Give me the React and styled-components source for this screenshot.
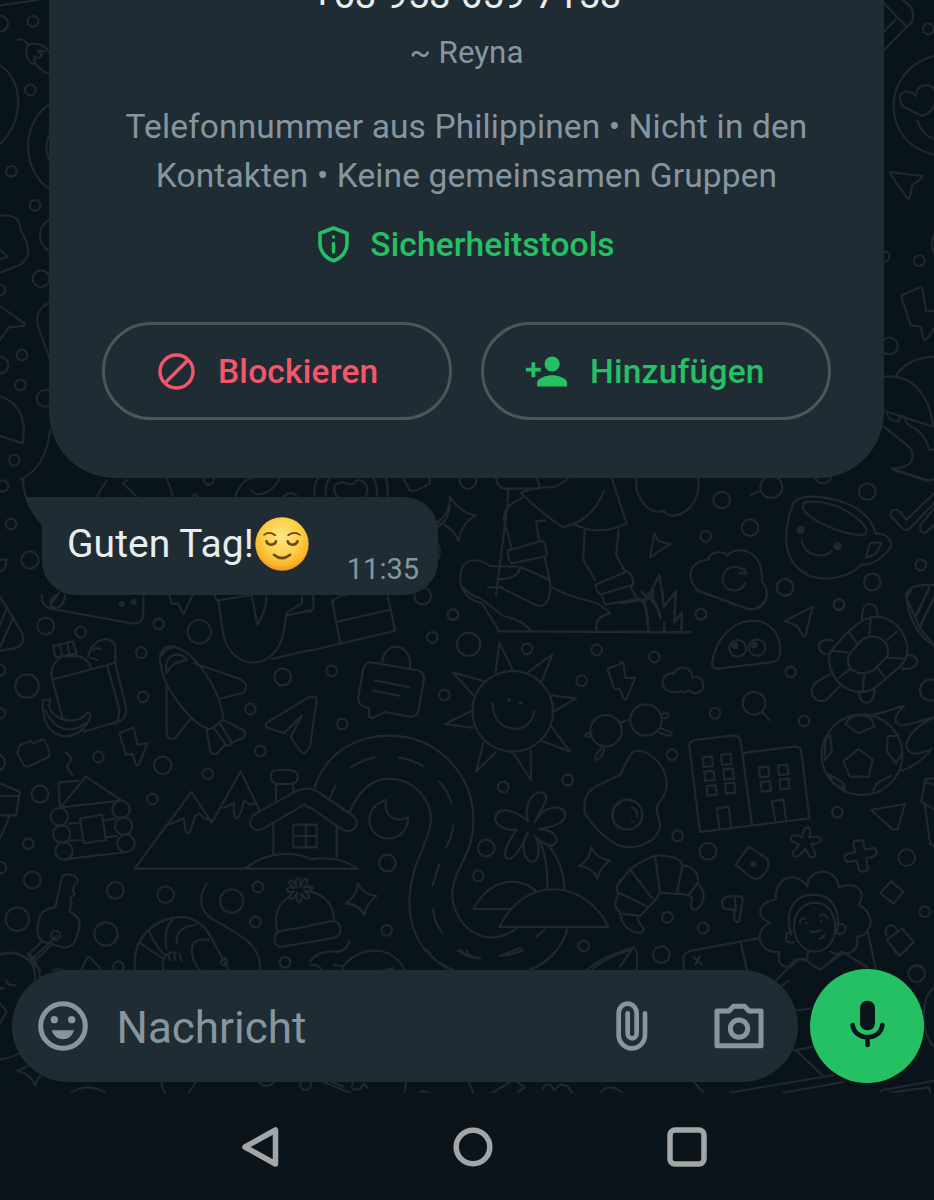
import styled, { createGlobalStyle } from 'styled-components';
import { MdPersonAdd } from 'react-icons/md';

const colors = {
  wallpaper: '#09141a',
  doodle: '#1f282f',
  surface: '#202c33',
  navigation: '#0b141a',
  outline: '#4b565d',
  text: '#e9edef',
  muted: '#8696a0',
  green: '#25c063',
  red: '#f4566a',
};

const GlobalStyle = createGlobalStyle`
  body {
    margin: 0;
    background: ${colors.navigation};
    font-family: Roboto, 'Liberation Sans', sans-serif;
  }
`;

const Screen = styled.div`
  display: flex;
  flex-direction: column;
  width: 934px;
  height: 1200px;
  overflow: hidden;
`;

const Chat = styled.main`
  position: relative;
  display: flex;
  flex-direction: column;
  height: 1093px;
  overflow: hidden;
  background: ${colors.wallpaper};
`;

const WallpaperSvg = styled.svg`
  position: absolute;
  top: 0;
  left: 0;
  fill: none;
  stroke: ${colors.doodle};
  stroke-width: 6.4px;
  stroke-linecap: round;
  stroke-linejoin: round;
`;

const ContactCard = styled.section`
  position: relative;
  display: flex;
  flex-direction: column;
  align-items: center;
  box-sizing: border-box;
  height: 478px;
  margin: 0 50px 0 49px;
  border-radius: 0 0 66px 66px;
  background: ${colors.surface};
  text-align: center;
`;

const PhoneNumber = styled.h1`
  height: 32px;
  margin: -21px 0 0;
  color: ${colors.text};
  font-size: 38.5px;
  font-weight: 400;
  line-height: 32px;
  white-space: nowrap;
`;

const Nickname = styled.p`
  margin: 22px 0 0;
  color: ${colors.muted};
  font-size: 31.3px;
  line-height: 40px;
`;

const Details = styled.p`
  margin: 30px 0 0;
  color: ${colors.muted};
  font-size: 33.5px;
  line-height: 48.5px;
  letter-spacing: 0.12px;
`;

const SafetyLink = styled.a`
  display: flex;
  align-items: center;
  gap: 21px;
  height: 40px;
  margin-top: 24px;
  color: ${colors.green};
  font-size: 33.5px;
  font-weight: 500;
  letter-spacing: 0.1px;
`;

const Actions = styled.div`
  display: flex;
  gap: 29px;
  margin-top: 58px;
`;

const ActionButton = styled.button`
  display: flex;
  align-items: center;
  box-sizing: border-box;
  width: 350px;
  height: 98px;
  padding: 0 0 0 ${props => props.$inset}px;
  gap: ${props => props.$gap}px;
  border: 3px solid ${colors.outline};
  border-radius: 49px;
  background: none;
  color: ${props => props.$color};
  font-family: inherit;
  font-size: 33.5px;
  font-weight: 500;
  letter-spacing: 0.22px;
`;

const Bubble = styled.article`
  position: relative;
  display: flex;
  justify-content: space-between;
  box-sizing: border-box;
  width: 396px;
  height: 98px;
  margin: 19px 0 0 42px;
  padding: 0 19px 0 25px;
  border-radius: 0 34px 34px 34px;
  background: ${colors.surface};
`;

const BubbleTail = styled.svg`
  position: absolute;
  top: 0;
  left: -18px;
  fill: ${colors.surface};
`;

const Message = styled.p`
  display: flex;
  align-items: center;
  gap: 1px;
  height: 94px;
  margin: 0;
  color: ${colors.text};
  font-size: 39px;
  letter-spacing: 0.05px;
`;

const Time = styled.time`
  align-self: flex-end;
  margin-bottom: 9px;
  color: ${colors.muted};
  font-size: 29px;
  line-height: 34px;
`;

const Footer = styled.footer`
  position: relative;
  display: flex;
  align-items: center;
  gap: 12px;
  margin: auto 10px 10.5px 12px;
`;

const Composer = styled.div`
  display: flex;
  align-items: center;
  box-sizing: border-box;
  width: 786px;
  height: 112px;
  padding: 0 34px 0 26px;
  border-radius: 56px;
  background: ${colors.surface};
  color: ${colors.muted};
`;

const Placeholder = styled.span`
  flex: 1;
  margin-left: 28.5px;
  padding-top: 4px;
  font-size: 44px;
`;

const ComposerTools = styled.div`
  display: flex;
  align-items: center;
  gap: 66px;
`;

const MicButton = styled.button`
  display: flex;
  align-items: center;
  justify-content: center;
  width: 114px;
  height: 114px;
  padding: 0 0 3px;
  box-sizing: border-box;
  border: 0;
  border-radius: 50%;
  background: ${colors.green};
  color: ${colors.navigation};
`;

const Navigation = styled.nav`
  display: flex;
  align-items: center;
  justify-content: center;
  gap: 174px;
  flex: 1;
  padding-left: 14px;
  background: ${colors.navigation};
`;

const NavIcon = styled.svg`
  fill: none;
  stroke: #a3a5a7;
  stroke-width: 5.5px;
  stroke-linejoin: round;
`;

// Each tile is drawn at three units per pixel, with its corner at x, y
const tiles = [
  {
    x: 0,
    y: 590,
    circles: [
      [137, 108, 25], [242, 126, 16], [476, 102, 16], [598, 125, 35],
      [424, 188, 16], [81, 288, 35], [429, 321, 16], [848, 261, 25],
      [751, 357, 16], [781, 483, 16], [295, 501, 16], [488, 526, 26],
      [623, 551, 16], [120, 612, 25], [457, 627, 16], [85, 761, 16],
      [0, 241, 16], [0, 370, 16], [-10, 518, 25], [2, 833, 17],
      [97, 870, 25], [346, 901, 25], [497, 914, 25], [695, 933, 35],
      [774, 891, 16], [766, 996, 16], [52, 988, 35], [318, 1032, 35],
      [355, 1130, 16], [855, 1117, 16], [366, 42, 6], [401, 36, 6],
      [178, 680, 26], [185, 732, 26], [192, 783, 26], [363, 658, 26],
      [371, 708, 26], [378, 760, 26], [167, 1036, 13],
    ],
    paths: [
      // road cone
      'M0 20L66 128Q78 165 45 175L0 182M22 50L0 105M40 82L0 172',
      // cheese
      'M126 15Q122 50 158 57L395 100Q428 104 430 70V15M195 15Q190 60 158 52Q140 30 170 15M150 45L178 8',
      'M508 15L516 42L535 40L550 73L578 15',
      // shovel
      'M645 15L650 32L755 15L772 105Q800 60 800 15M655 30L668 120C680 240 830 260 852 120L860 68L906 40V15M860 76L930 62M815 207L930 180',
      // picnic bag
      'M160 168L218 154Q226 175 230 190L170 202Q160 190 160 168M180 165L186 198M202 160L208 194M180 204Q150 225 155 260L188 387M200 200Q262 190 273 235M160 268L342 220M264 200C275 145 335 130 346 170V220L378 350Q382 380 362 392L250 425M322 228L356 350Q362 380 345 402M330 222L342 220M280 180Q290 170 304 178M272 204L294 210',
      'M128 330L150 328L148 350C155 390 230 410 262 368Q275 368 270 385C250 430 205 450 170 432Q125 410 128 330M136 362Q180 450 258 400',
      // rocket
      'M484 230C470 190 490 165 525 170C590 190 660 300 670 385Q650 410 628 418C570 400 490 290 484 230M500 250Q490 200 530 193Q550 195 562 210Q515 215 500 250M582 220L722 268Q750 285 730 308L660 326M500 290V435Q508 455 526 444L570 388M620 420L630 482Q638 498 652 490L676 463M668 388L732 422Q742 438 724 446L694 458M640 412L676 462Q690 476 694 456L662 404M484 196Q500 170 530 172',
      'M930 320L800 398Q792 410 806 414L852 430L906 376L872 442L900 482Q914 500 922 480L930 470',
      // brick and lightning
      'M60 465L92 452L98 460L128 447Q136 448 150 492Q148 500 140 504L84 530Q74 532 68 520L52 490Q54 478 60 465',
      'M358 430L402 412L412 464L442 460L418 522Q410 530 406 520L398 492L378 494L358 430',
      // log house
      'M197 487Q216 500 212 515Q196 525 206 540L219 557M180 650L175 578L236 572M182 652L258 560L362 630M182 652L362 632M204 702L242 698M316 690L344 686M210 752L250 750M318 742L350 738M192 808L380 786M240 686L306 674L318 750L252 760Z',
      // pot
      'M0 580L60 605L48 676H0M0 618H56M28 680L0 745',
      // mountains and cottage
      'M404 836L574 606L635 698L722 544L778 660M404 836H930M506 704L552 684C555 750 570 740 584 680L598 670L612 684L632 690M668 654L702 640C698 705 718 700 732 630L750 644L770 640M830 582H880V608M828 632V582Q810 575 813 556Q816 540 836 540H872Q894 545 894 562Q892 582 870 582M930 596Q900 596 880 608L762 674C735 700 758 730 790 716L912 644L930 654M820 704V792M735 836C800 784 880 784 930 806M930 704H880V772H930M918 704V772M880 738H930',
      // keys
      'M166 952L186 862Q194 852 204 852L224 858Q234 865 232 876L222 885V892L218 900L224 912L210 925L214 940L208 965C225 972 244 985 238 1015L225 1055Q210 1075 188 1072L145 1060Q112 1055 112 1020C115 980 122 955 166 952M170 1038L98 1105M126 1054L84 1095M158 1060L110 1108M84 1090L110 1108M0 1094Q60 1072 105 1130M88 1100L120 1140',
      // shrimp
      'M405 1140C395 1030 480 975 560 982Q610 995 632 1040L686 1140M422 1060L488 1105M446 1020Q460 1060 494 1094M500 1078Q490 1010 518 990M530 1060Q525 1010 590 1004M576 1090Q570 1040 626 1050M490 1140C480 1100 510 1080 528 1090M510 1112L506 1098M524 1110V1094M544 1112L540 1092M576 1090Q580 1120 600 1140',
      'M620 880C590 930 600 975 660 1000C730 1040 785 1070 780 1140M244 1140L262 1102Q270 1100 276 1108L304 1140',
      // wool hat
      'M838 1024Q822 1030 824 1052Q828 1072 846 1070L930 1056M835 1024L930 1008M830 1020Q820 950 865 922M890 892Q882 866 894 864Q904 866 900 890Q910 864 920 868Q928 876 910 894Q934 884 938 894Q936 906 912 904Q934 914 926 924Q916 930 904 910Q908 936 896 936Q886 932 892 908Q880 930 870 926Q864 916 882 904Q860 910 860 898Q862 890 882 894Q862 880 870 872Q880 868 890 892',
    ],
  },
  {
    x: 310,
    y: 590,
    circles: [
      [338, 18, 25], [429, 74, 16], [367, 142, 16], [476, 163, 35],
      [651, 177, 16], [860, 180, 16], [65, 242, 16], [403, 315, 16],
      [815, 272, 16], [97, 402, 16], [580, 591, 16], [773, 570, 16],
      [232, 819, 25], [529, 774, 25], [505, 857, 16], [230, 1021, 16],
      [821, 1068, 16], [608, 364, 121], [597, 331, 3], [631, 339, 3],
      [888, 422, 47],
    ],
    paths: [
      'M0 182L256 122L232 15M66 30L90 155M78 96L238 60M10 15V55Q5 65 0 65M66 40Q80 15 110 15',
      // chat note
      'M218 215C220 150 310 155 300 235M184 217L320 240Q344 246 342 268L326 360Q320 382 300 380L224 366L188 384Q174 384 176 370L178 355Q145 350 144 325L160 235Q168 215 184 217M194 271L300 292M188 301L267 317',
      // sun
      'M557 248L568 158L608 240M654 247L728 192L695 274M724 316L798 325L731 364M724 410L780 485L694 452M662 482L663 570L610 490M558 486L498 544L521 456M490 414L405 402L486 362M490 316L428 247L522 274M548 339C546 435 664 440 673 363',
      // road
      'M14 592C50 480 150 436 240 437C380 438 490 550 490 690C490 745 478 775 456 820C420 890 420 925 440 970C480 1050 560 1060 618 1016M120 664C150 595 190 565 240 566C310 568 363 625 363 690C360 745 320 800 308 860C275 1000 330 1100 430 1140M772 1018Q755 1090 664 1140M60 625L76 587M122 533Q155 510 194 502M266 502Q310 510 338 528M387 573Q415 605 425 640M430 707Q425 745 408 772M388 822L368 887M368 958Q375 1000 396 1029M443 1081Q475 1105 510 1105M570 1098L632 1074M680 1040L706 1018',
      // moon
      'M228 630C205 638 178 655 178 690C180 765 295 765 294 682C255 700 220 680 228 630',
      // cottage roof
      'M0 597Q15 598 25 606L130 678C158 705 125 735 96 718L0 652M80 708V806M0 704H20V772H0M0 738H20M0 808Q85 795 144 836H0',
      // palm and islands
      'M654 694C640 650 665 605 695 607C730 620 685 670 674 696C700 645 760 640 766 675C765 705 710 712 688 718C740 720 750 750 730 765C710 775 680 740 674 738C690 760 690 810 670 816C640 815 630 760 654 728C640 760 610 815 592 806C570 790 605 740 620 718C590 725 550 705 556 680C570 640 625 670 650 690M690 756Q715 810 712 896M716 768Q760 820 764 900M490 957H605M490 957C550 850 640 865 680 906M568 1011H896C820 860 640 860 568 1011',
      'M144 880Q160 915 200 918Q170 940 162 976Q148 942 106 940Q140 920 144 880M844 772Q860 808 900 811Q870 832 862 866Q850 832 806 828Q838 812 844 772',
      'M0 905Q70 920 72 992L0 1006M72 992Q95 1000 90 1030Q85 1040 70 1044L0 1056M0 890V905M118 1052Q110 1085 80 1085Q20 1080 0 1115M0 1126Q20 1120 36 1140M72 1126L100 1128L98 1140M100 1128C160 1060 250 1070 284 1140M222 1140L250 1136M830 1140Q880 1100 930 1086',
      'M846 428Q820 432 826 438Q836 442 846 438M876 472Q850 500 858 510Q875 508 884 474M930 222L892 236L912 294Q916 302 930 296M930 556C850 590 815 600 824 670C850 710 890 750 930 768M930 640C900 650 900 700 930 714M930 870Q915 890 925 915Q905 950 930 966',
      'M0 470L20 330Q22 318 0 322',
    ],
  },
  {
    x: 620,
    y: 590,
    circles: [
      [243, 73, 16], [657, 43, 16], [103, 201, 16], [512, 246, 16],
      [285, 370, 16], [552, 393, 16], [156, 494, 16], [652, 667, 16],
      [173, 737, 16], [264, 784, 25], [860, 803, 25], [914, 965, 16],
      [142, 982, 16], [249, 1014, 16], [124, 1094, 25], [353, 175, 25],
      [411, 173, 25], [345, 167, 7], [403, 165, 7], [402, 340, 34],
      [78, 390, 47], [22, 674, 45], [726, 494, 121], [400, 823, 6],
      [495, -8, 25], [932, 300, 32],
    ],
    paths: [
      'M0 40L74 28L85 122M0 125L211 127M66 5Q80 20 82 30M85 8Q115 40 120 84M100 0L98 30M128 0L131 50L168 6L162 98L186 68L184 122M132 100V122M228 0L375 54C420 70 450 30 438 0',
      // blob with eyes
      'M276 220C300 60 480 55 480 180V192Q478 210 460 216L294 236Q275 236 276 220M495 93L578 50L556 138Q550 144 545 130L532 108Z',
      'M0 216L10 218L16 264L46 263L18 328Q12 335 0 296',
      'M138 300C115 275 135 245 160 252C170 225 215 225 217 262C250 250 262 300 235 307C225 312 212 308 205 300Q195 312 184 302Q165 312 138 300M427 365L449 390M0 398L30 388M0 396Q12 425 0 445M124 378Q128 365 142 370Q150 378 138 384L125 386M122 414L152 427Q160 435 148 438L118 428',
      // turtle
      'M646 168C720 80 770 55 830 105C870 150 870 195 845 225L770 290C720 325 650 300 630 230Q620 190 646 168M690 190L725 150C770 120 820 160 800 200L764 238C715 270 665 230 690 190M726 92Q725 40 750 42Q776 45 772 84M640 152C580 135 590 200 628 192M634 250L592 275C555 300 585 345 618 330L658 290M718 304C715 350 765 350 764 298M858 195C905 190 905 245 845 236M630 182L682 187M688 126L710 160M752 84L748 136M830 126L800 150M802 203L858 206M770 230L794 262M733 254L728 304M688 238L656 264',
      'M864 0C850 60 895 145 942 164M875 0L860 20M926 0L884 80M942 22L898 112',
      // apartment blocks
      'M240 726L208 470Q206 454 224 450L342 436Q358 436 362 454L396 704M240 726L568 685L544 486Q540 468 524 470L376 488Q370 490 370 500M298 715L290 656L326 650L334 712M466 692L456 634L490 629L498 688M248 502L276 499L278 528L251 531ZM303 494L332 491L335 522L306 525ZM252 545L280 542L284 570L256 573ZM310 538L338 535L342 566L313 569ZM260 588L287 586L290 614L262 617ZM315 581L343 578L346 607L318 610ZM417 533L445 530L448 559L420 562ZM474 526L502 524L505 552L477 555ZM422 576L450 573L453 602L425 605ZM479 569L506 566L509 595L481 598Z',
      // football on fire
      'M715 477L758 508L746 560H690L670 514ZM676 402L715 430L764 410L752 384Q720 368 690 384ZM836 438H804L800 484L828 520L846 490M630 434L616 452L614 512L636 484ZM626 552L640 580L676 598L668 578ZM760 602L770 580L814 556M760 373C800 368 820 355 852 348C800 400 840 410 860 404L942 382C840 430 840 500 900 490L934 478Q890 530 844 542',
      // fried egg
      'M0 556C30 500 30 460 90 495C140 530 160 590 115 640C95 680 150 700 95 750Q55 780 0 768M36 652Q54 660 50 680M35 694L37 695',
      'M753 660L855 642L832 720L818 718ZM942 565L916 567L904 636L942 658M914 640L930 760L942 770M916 575L942 585',
      'M386 770L442 806Q454 840 416 866Q400 870 380 852L347 824ZM547 742L550 724C555 708 570 710 571 724L568 742Q605 735 602 752Q598 762 574 762L586 790Q588 808 570 800L556 776L538 796Q518 806 518 788L538 764L516 754C505 735 525 730 547 742M700 762L702 754L728 750L734 778L764 774Q776 790 762 800L738 804L744 835Q735 850 718 842L710 812L680 816Q668 802 680 792L706 786ZM813 874L850 905L821 941L781 910Z',
      // croissant
      'M0 880C25 830 70 810 105 797C150 795 180 805 188 826C225 830 240 860 232 880C265 910 250 950 225 960Q208 960 216 922Q200 910 170 912L120 908L104 932L62 976Q40 980 70 1014Q75 1030 50 1028C20 1020 5 1000 0 970M28 835L96 925M105 797L120 908M188 826L170 912M232 880L208 912M0 910L86 952M0 970L62 978',
      'M344 958H322Q304 955 306 936Q310 918 330 919H364Q370 922 368 930L358 992Q350 1002 342 990ZM344 924L348 958',
      // curly hair portrait
      'M468 930C460 860 530 840 562 890C560 835 650 825 656 892C715 870 740 910 716 945C760 965 755 1010 742 1020L768 1140M468 930C420 930 400 980 450 998C400 1020 410 1090 478 1086C465 1140 520 1140 530 1112M742 1020Q735 1040 710 1040C720 1080 690 1095 670 1088M514 1034C490 960 525 914 580 914C640 915 665 965 650 1030M584 938C545 940 522 970 522 1012C525 1055 552 1085 584 1085C618 1085 646 1055 646 1012C646 970 622 938 584 938M500 1034Q495 1030 516 1026M500 1034Q492 1064 524 1056M652 1002Q680 1000 676 1020Q665 1038 646 1028M540 998Q542 982 556 986M600 978Q612 966 622 984M558 1000H561M602 993H605M572 1024Q585 1030 602 1020M598 1046Q612 1044 614 1032M564 1088L560 1110Q530 1095 500 1140M600 1140L664 1085L740 1130M630 1085L650 1092',
      'M192 1140L190 1105Q195 1085 215 1082L420 1044M362 1056L380 1140M220 1100L246 1124M240 1098L226 1124M0 1085L40 1072Q56 1075 50 1140M40 1072L0 1130',
      'M800 1050L846 1016L882 1056L838 1096ZM800 1036C785 1000 830 995 832 1028M870 1140Q890 1115 912 1140',
    ],
  },
  {
    x: 420,
    y: 470,
    circles: [
      [144, 32, 25], [905, 90, 25], [990, 173, 25], [857, 199, 16],
      [1054, 51, 33], [1342, 65, 25], [1502, 285, 16], [1357, 336, 25],
      [1095, 352, 25], [1257, 404, 16], [843, 433, 16], [99, 433, 16],
      [1209, 15, 25], [1142, 180, 9], [1253, 229, 9],
    ],
    paths: [
      'M90 80Q120 130 168 136Q122 160 116 214Q98 168 50 156Q90 135 90 80M990 74L1022 62',
      // hiker
      'M228 24Q232 55 256 56H340Q362 62 356 40L350 24M256 56L264 60L262 106M302 68Q370 135 430 172Q520 150 552 62M302 68Q350 50 400 52Q430 40 444 24M575 24L620 160Q540 200 466 164M308 84Q250 105 252 150L276 238M262 106L228 376M376 152L348 154L358 214M264 242L366 212Q380 220 380 258L276 280Q262 270 264 242M374 262L390 335C395 400 370 415 345 404L240 352M204 352H248M300 290L390 330M300 290Q300 325 236 328M290 290L210 288C150 250 110 280 124 348C140 390 170 395 186 400L238 484L812 487M124 348Q155 380 180 384L250 438Q310 450 332 482M398 352C470 400 520 375 570 430Q520 440 530 482M494 180L490 270L526 330M596 180L588 256L614 302M526 344L622 304Q640 315 640 344L546 372Q530 375 526 344M545 374L556 404L660 386M632 350L650 384M650 386Q685 385 685 482',
      'M664 366Q715 400 722 444M690 370L718 314L732 410L768 362L762 454L786 430L784 482M733 460V482',
      // apple and cloud
      'M650 24C640 80 690 140 730 122C760 165 850 110 834 24M703 190L714 212L750 222L690 262ZM864 270C870 245 905 240 922 256C950 225 1030 235 1026 335C1060 370 1030 430 975 415L836 362C790 320 815 270 864 270M974 302C940 275 905 300 908 332C915 370 965 370 976 338M974 296L978 312L958 308',
      // cup
      'M1120 100C1140 65 1250 80 1310 115Q1360 150 1366 190M1120 100C1100 150 1080 240 1130 290C1180 345 1280 330 1324 284M1366 190C1400 190 1420 210 1410 235Q1370 285 1324 284M1350 220Q1370 215 1384 220Q1370 260 1338 262ZM1148 112C1140 80 1240 95 1290 130C1340 160 1350 190 1330 194C1280 200 1160 150 1148 112M1145 212C1155 260 1210 265 1234 244',
      'M1542 70L1460 150L1434 120Q1410 115 1412 138L1450 178Q1465 184 1475 170L1542 100M1542 115L1502 165Q1496 185 1515 190L1542 165M1420 0L1520 32L1542 28M1542 345Q1460 340 1458 380L1500 475L1542 525M1530 345L1490 440M1542 385L1500 470',
    ],
  },
  {
    x: 0,
    y: 480,
    circles: [
      [33, 132, 16], [90, 240, 26], [626, -2, 16], [8, 18, 17],
    ],
    paths: [
      'M70 -6Q68 30 82 60M0 240L20 238Q18 270 0 275M320 0L290 50M382 0L368 10L410 50M500 -6L520 50M576 48L586 42L594 50M706 50Q720 0 760 -6M752 30C770 60 830 30 838 -6M850 50Q870 30 890 48M944 50Q940 10 955 -6M976 50Q976 10 990 -6M1012 50C990 20 1010 0 1040 10Q1060 20 1070 0C1100 0 1110 30 1096 50M1130 50Q1134 20 1120 -6M1162 50Q1166 20 1158 -6M1210 -6L1228 30Q1240 40 1290 10L1288 -6',
      'M1314 140Q1340 130 1350 80M1314 190Q1326 220 1312 240',
    ],
  },
  {
    x: 0,
    y: 0,
    circles: [
      [0, 71, 24], [99, 64, 16], [91, 270, 16], [34, 514, 16],
      [105, 616, 16], [123, 836, 25], [0, 870, 16], [66, 1065, 16],
      [0, 1095, 25], [61, 1155, 16], [135, 1195, 25], [43, 1381, 16],
    ],
    paths: [
      'M0 16L115 0M54 120Q70 114 85 134C110 125 140 140 146 155M85 134C70 160 85 195 105 190Q125 215 148 222M106 190L102 170L118 174L126 166L112 152L134 154M0 196C70 240 75 360 0 432M150 312C70 360 55 500 150 570M148 405Q130 440 148 480M0 648C50 640 60 665 62 690C95 750 90 770 60 795L0 818M0 748L22 770L0 778M150 658C110 680 110 730 150 756M150 908C110 920 105 960 118 990L150 1080M0 918L76 972Q74 980 64 978L26 982L0 1020M0 1188C60 1210 80 1260 68 1330L0 1308M150 1290Q140 1400 60 1440',
    ],
  },
  {
    x: 870,
    y: 0,
    circles: [[175, 87, 16], [148, 782, 16], [42, 770, 16], [58, 1038, 25]],
    paths: [
      'M98 0Q140 25 126 65L42 150M42 10L108 78M42 95L78 58M192 168C30 210 30 430 192 464M156 348L100 320C70 280 110 260 138 288C140 245 190 250 192 270M192 320Q180 340 156 348M142 362Q155 405 192 418M60 520Q62 514 72 518L156 528Q160 534 126 556L120 590Q116 602 108 590ZM192 705Q180 730 192 760M192 932L168 934L158 870Q156 860 146 864L98 884Q92 888 96 896L122 976L152 980L162 1020Q168 1028 192 985M80 1125Q110 1075 192 1070M42 1130C130 1120 180 1190 190 1280L42 1232M50 1240Q60 1265 86 1266L90 1250L102 1248Q110 1278 132 1284Q165 1300 178 1350L192 1348M42 1280C110 1340 140 1340 124 1385Q110 1405 66 1406L172 1440',
    ],
  },
  {
    x: 0,
    y: 950,
    circles: [[355, 50, 16], [672, 36, 10], [855, 37, 16], [917, 404, 16]],
    paths: [
      'M0 12C60 0 110 30 105 90M95 20Q125 60 118 90M18 90Q22 108 45 106M0 115H10M0 160L20 185L0 220M0 328Q40 325 70 300M52 362Q90 350 100 330M52 362Q95 372 106 408Q110 385 125 375M215 428Q260 396 316 428M486 396Q484 415 496 428M588 396L566 428M776 396Q800 420 824 396M970 396L1050 428M996 396L1030 410M1060 396Q1050 415 1062 418H1080L1092 400L1104 415M1218 396L1214 428M1260 428Q1270 418 1284 428M1280 0Q1310 40 1350 58M1380 0L1400 15M160 60Q180 55 190 62',
    ],
  },
  {
    x: 467,
    y: 950,
    circles: [[1349, 71, 25]],
    paths: [
      'M0 0Q0 20 40 24M98 18Q140 14 168 0M190 58Q240 40 270 0M376 58Q420 20 490 0M826 0L840 58M920 100L985 30Q1010 20 1040 48L1060 58L1130 8L1200 52M930 118L966 92M985 182L1030 176M980 302L1040 290M990 304L1066 376M790 428L1100 375M950 428L1130 396M5 396L18 428M76 428L130 396M150 396L172 412L150 428M228 420Q230 400 250 404L262 420L280 404L300 408L316 428M400 428Q430 396 464 428M680 396L710 428M1401 112C1360 140 1360 250 1401 290M1240 428Q1240 420 1260 418L1401 392M1270 428L1385 412L1390 428M1280 0L1296 18L1320 0',
    ],
  },
];

const Wallpaper = () => (
  <WallpaperSvg width="934" height="1093" viewBox="0 0 934 1093">
    {tiles.map(({ x, y, circles, paths }) => (
      <g key={`${x}-${y}`} transform={`translate(${x} ${y}) scale(0.33333)`}>
        {circles.map(([cx, cy, r]) => (
          <circle
            key={`${cx}-${cy}`}
            cx={cx}
            cy={cy}
            r={r}
            fill={r < 10 ? colors.doodle : 'none'}
          />
        ))}
        {paths.map(d => (
          <path key={d} d={d} />
        ))}
      </g>
    ))}
  </WallpaperSvg>
);

const ShieldIcon = () => (
  <svg width="31" height="37" viewBox="0 0 31 37" fill="none">
    <path
      d="M15.5 2L29 7.2V17c0 8.300-5.600 15.300-13.500 17.800C7.600 32.300 2 25.300 2 17V7.200z"
      stroke="currentColor"
      strokeWidth="3.600"
      strokeLinejoin="round"
    />
    <path
      d="M15.500 17.500v8.500M15.500 10.900v.1"
      stroke="currentColor"
      strokeWidth="3.400"
      strokeLinecap="round"
    />
  </svg>
);

const BlockIcon = () => (
  <svg
    width="37"
    height="37"
    viewBox="0 0 37 37"
    fill="none"
    stroke="currentColor"
    strokeWidth="3.400"
  >
    <circle cx="18.500" cy="18.500" r="16.500" />
    <path d="M7.500 29.500l22-22" />
  </svg>
);

const RelievedFace = () => (
  <svg width="54" height="54" viewBox="0 0 160 160" fill="none">
    <defs>
      <radialGradient id="face" cx="50%" cy="38%" r="62%">
        <stop offset="0" stopColor="#ffe58c" />
        <stop offset="0.550" stopColor="#fdd04a" />
        <stop offset="0.850" stopColor="#fbb429" />
        <stop offset="1" stopColor="#f0921e" />
      </radialGradient>
    </defs>
    <circle cx="80" cy="80" r="79" fill="url(#face)" />
    <g stroke="#6b4612" strokeWidth="7.500" strokeLinecap="round">
      <path d="M27 53Q40 41 60 54M98 54Q118 41 133 53" strokeWidth="5" />
      <path d="M34 72Q36 82 48 82Q60 82 62 72M97 72Q99 82 111 82Q123 82 126 72" />
      <path d="M56 112Q80 132 104 112" />
    </g>
  </svg>
);

const SmileyIcon = () => (
  <svg width="50" height="50" viewBox="0 0 150 150" fill="currentColor">
    <circle
      cx="75"
      cy="75"
      r="67"
      fill="none"
      stroke="currentColor"
      strokeWidth="15"
    />
    <circle cx="49" cy="56" r="11" />
    <circle cx="101" cy="56" r="11" />
    <path d="M41 88H108C103 106 90 115 75 115S47 106 41 88z" />
  </svg>
);

const ClipIcon = () => (
  <svg
    width="32"
    height="50"
    viewBox="0 0 96 150"
    fill="none"
    stroke="currentColor"
    strokeWidth="14"
    strokeLinecap="round"
  >
    <path d="M87 37V101A39.500 41 0 0 1 8 101V37A27 29 0 0 1 62 37V98A13.500 14 0 0 1 35 98V37" />
  </svg>
);

const CameraIcon = () => (
  <svg
    width="50"
    height="46"
    viewBox="0 0 150 138"
    fill="none"
    stroke="currentColor"
    strokeWidth="15"
    strokeLinejoin="round"
  >
    <path d="M9 24H45L58 10H92L105 24H141V128H9Z" />
    <circle cx="75" cy="77" r="26" />
  </svg>
);

const MicIcon = () => (
  <svg
    width="35"
    height="48"
    viewBox="0 0 105 144"
    fill="none"
    stroke="currentColor"
    strokeWidth="14"
    strokeLinecap="round"
  >
    <rect x="30" y="2" width="45" height="89" rx="22" fill="currentColor" stroke="none" />
    <path d="M8 75C13 124 92 124 97 75M52.500 112V135" />
  </svg>
);

const App = () => (
  <>
    <GlobalStyle />
    <Screen>
      <Chat>
        <Wallpaper />
        <ContactCard>
          <PhoneNumber>+63 953 659 7153</PhoneNumber>
          <Nickname>~ Reyna</Nickname>
          <Details>
            Telefonnummer aus Philippinen • Nicht in den
            <br />
            Kontakten • Keine gemeinsamen Gruppen
          </Details>
          <SafetyLink>
            <ShieldIcon />
            Sicherheitstools
          </SafetyLink>
          <Actions>
            <ActionButton $color={colors.red} $inset={53} $gap={23}>
              <BlockIcon />
              Blockieren
            </ActionButton>
            <ActionButton $color={colors.green} $inset={40} $gap={21}>
              <MdPersonAdd size={45} />
              Hinzufügen
            </ActionButton>
          </Actions>
        </ContactCard>
        <Bubble>
          <BubbleTail width="20" height="32" viewBox="0 0 20 32">
            <path d="M20 0H3Q0 0 2 4Q8 18 18 29L20 32z" />
          </BubbleTail>
          <Message>
            Guten Tag!
            <RelievedFace />
          </Message>
          <Time>11:35</Time>
        </Bubble>
        <Footer>
          <Composer>
            <SmileyIcon />
            <Placeholder>Nachricht</Placeholder>
            <ComposerTools>
              <ClipIcon />
              <CameraIcon />
            </ComposerTools>
          </Composer>
          <MicButton>
            <MicIcon />
          </MicButton>
        </Footer>
      </Chat>
      <Navigation>
        <NavIcon width="37" height="40" viewBox="0 0 37 40">
          <path d="M3 20L33.500 3V37Z" />
        </NavIcon>
        <NavIcon width="40" height="40" viewBox="0 0 40 40">
          <circle cx="20" cy="20" r="16.800" />
        </NavIcon>
        <NavIcon width="40" height="40" viewBox="0 0 40 40">
          <rect x="3" y="3" width="34" height="34" rx="5" />
        </NavIcon>
      </Navigation>
    </Screen>
  </>
);

export default App;
